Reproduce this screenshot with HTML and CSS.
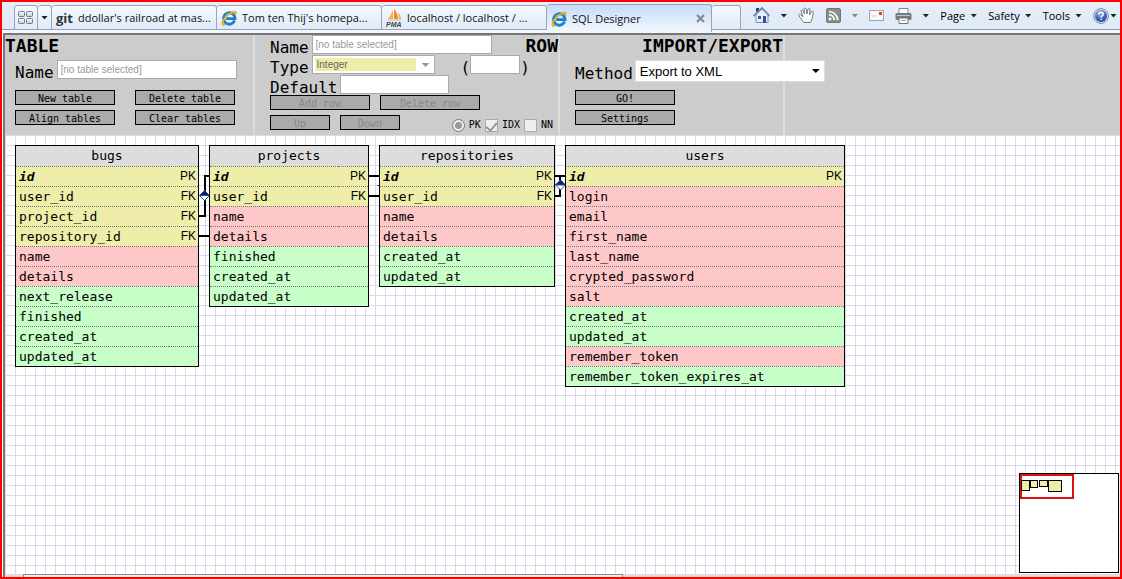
FILE: index.html
```html
<!DOCTYPE html>
<html lang="en">
<head>
<meta charset="utf-8">
<title>SQL Designer</title>
<link rel="stylesheet" href="styles.css">
</head>
<body>
<svg class="defs" width="0" height="0" aria-hidden="true">
  <defs>
    <linearGradient id="steel" x1="0" y1="0" x2="0" y2="1"><stop offset="0" stop-color="#fff"/><stop offset="1" stop-color="#c3cad6"/></linearGradient>
    <radialGradient id="orb" cx=".4" cy=".25" r=".8"><stop offset="0" stop-color="#8db4ee"/><stop offset="1" stop-color="#173a9c"/></radialGradient>
    <symbol id="ie" viewBox="0 0 16 16">
      <path d="M13.6 10.6A5.7 5.7 0 1 1 14 8.6H5.2" fill="none" stroke="#1c7fd0" stroke-width="2.8"/>
      <path d="M4.6 5.6A5 5 0 0 1 11.5 4.4" fill="none" stroke="#7cc6f5" stroke-width="1"/>
      <path d="M1.4 15.2C-.6 13 2.600 7 7.500 3.500C11 1 15 .2 15.300 2.200C15.500 3.200 14.800 4.500 14.200 5.300C14.600 3.200 13.500 2.300 11 3.300C6.500 5.100 2.400 10.500 2.400 13.200C2.400 14.600 4 14.500 5.500 13.700C4.200 15.200 2.400 16 1.400 15.200Z" fill="#f3bd1c" stroke="#c98d10" stroke-width=".4"/>
    </symbol>
  </defs>
</svg>

<header class="browser">
  <nav class="tabs" aria-label="Tabs">
    <button class="tab quick" aria-label="Quick tabs">
      <svg width="16" height="14" viewBox="0 0 16 14"><g fill="url(#steel)" stroke="#6d7890"><rect x=".5" y=".5" width="6" height="5" rx="1"/><rect x="8.500" y=".5" width="6" height="5" rx="1"/><rect x=".5" y="7.500" width="6" height="5" rx="1"/><rect x="8.500" y="7.500" width="6" height="5" rx="1"/></g></svg>
    </button>
    <button class="tab list" aria-label="Tab list"><span class="caret"></span></button>
    <a class="tab page" href="#"><b class="git">git</b><span>ddollar's railroad at mas...</span></a>
    <a class="tab page" href="#"><svg width="16" height="16"><use href="#ie"/></svg><span>Tom ten Thij's homepa...</span></a>
    <a class="tab page" href="#">
      <svg width="16" height="18" viewBox="0 0 16 18"><path d="M7 1L7 10H2Q5 6 7 1Z" fill="#f6b04a"/><path d="M8 0Q12 5 12 10H8Z" fill="#f08c1a"/><path d="M12 3Q15 7 15 10H13Z" fill="#f6b04a"/><path d="M2 11H15" stroke="#b9bccb"/><text class="pma" x="0" y="18">PMA</text></svg>
      <span>localhost / localhost / ...</span></a>
    <a class="tab page active" href="#" aria-current="page"><svg width="16" height="16"><use href="#ie"/></svg><span>SQL Designer</span>
      <svg class="close" width="9" height="9" viewBox="0 0 9 9"><path d="M1 1L8 8M8 1L1 8" stroke="#858b96" stroke-width="2.200"/></svg></a>
    <button class="tab new" aria-label="New tab"></button>
  </nav>
  <div class="commands">
    <button class="cmd" aria-label="Home"><svg width="17" height="17" viewBox="0 0 17 17"><path d="M3 7V15.500H15V7L9 2Z" fill="#e6eefb" stroke="#7c8fb5"/><path d="M3 1H6V5H3Z" fill="#2839a8"/><path d="M.5 9L9 1L16.500 9" fill="none" stroke="#7488a8" stroke-width="1.800"/><path d="M10 9H13V16H10Z" fill="#31548f"/><path d="M5 9H8V12H5Z" fill="#3c5ca0"/></svg><span class="caret"></span></button>
    <button class="cmd" aria-label="Pan"><svg width="17" height="17" viewBox="0 0 17 17"><path d="M6 15.500C4 13 2 10.500.8 8.500C.6 7.200 2 7 3 8L5 10L3 4C3 2.500 4.500 2.300 5 3.500L6.500 7L6 2C6.200.6 7.800.6 8.200 2L9 7L10 2.200C10.500 1 12 1.300 12 2.800L11.500 8L13.500 4.500C14.200 3.500 15.600 4 15.300 5.500C14.500 9 14.500 12 12.500 15.500Z" fill="#fff" stroke="#74787e"/></svg></button>
    <button class="cmd" aria-label="Feeds"><svg width="15" height="15" viewBox="0 0 15 15"><rect x=".5" y=".5" width="14" height="14" rx="1.500" fill="#8c8c8c" stroke="#777"/><circle cx="4" cy="11" r="1.400" fill="#fff"/><path d="M3 6.800A5 5 0 0 1 8.200 12M3 3.500A8.500 8.500 0 0 1 11.500 12" fill="none" stroke="#fff" stroke-width="1.700"/></svg><span class="caret dim"></span></button>
    <button class="cmd" aria-label="Mail"><svg width="15" height="11" viewBox="0 0 15 11"><rect x=".5" y=".5" width="14" height="10" fill="#f8f8f8" stroke="#a3a3aa"/><path d="M10 2H13V5H10Z" fill="#df3c2c"/><path d="M3 6H8" stroke="#ccc"/></svg></button>
    <button class="cmd" aria-label="Print"><svg width="17" height="16" viewBox="0 0 17 16"><path d="M4 .5H13V6H4Z" fill="#fff" stroke="#888"/><rect x=".5" y="5" width="16" height="7" rx="1.500" fill="#777b80"/><path d="M2 7.500H15" stroke="#c3c5c8"/><path d="M4 10H13V15.500H4Z" fill="#fff" stroke="#777"/><path d="M6 12.500H11" stroke="#aaa"/></svg><span class="caret"></span></button>
    <button class="cmd">Page<span class="caret"></span></button>
    <button class="cmd">Safety<span class="caret"></span></button>
    <button class="cmd">Tools<span class="caret"></span></button>
    <button class="cmd" aria-label="Help"><svg width="16" height="16" viewBox="0 0 16 16"><circle cx="8" cy="8" r="7.500" fill="#cdd6e6" stroke="#8b97ae"/><circle cx="8" cy="8" r="6" fill="url(#orb)"/><path d="M5.800 6.500Q5.800 4.300 8 4.300T10.200 6.300Q10.200 7.400 8.200 8.600V9.500M8.200 10.700V12" fill="none" stroke="#fff" stroke-width="1.500"/></svg><span class="caret"></span></button>
  </div>
</header>

<main class="app">
  <div class="bar">
    <section class="panel panel-table">
      <h2>TABLE</h2>
      <div class="line"><label for="tname">Name</label><input class="wide" id="tname" value="[no table selected]" disabled></div>
      <div class="buttons"><button>New table</button><button>Delete table</button><button>Align tables</button><button>Clear tables</button></div>
    </section>
    <section class="panel panel-row">
      <div class="line"><label for="rname">Name</label><input class="wide" id="rname" value="[no table selected]" disabled><h2>ROW</h2></div>
      <div class="line"><label for="rtype">Type</label><span class="pick type"><select id="rtype" disabled><option>Integer</option></select></span><span class="size">(<input id="rsize" aria-label="Size" disabled>)</span></div>
      <div class="line"><label for="rdef">Default</label><input class="default" id="rdef" disabled></div>
      <div class="line actions"><button disabled>Add row</button><button disabled>Delete row</button></div>
      <div class="line actions short"><button disabled>Up</button><button disabled>Down</button>
        <span class="flags"><input type="radio" id="pk" checked disabled><label for="pk">PK</label><input type="checkbox" id="idx" checked disabled><label for="idx">IDX</label><input type="checkbox" id="nn" disabled><label for="nn">NN</label></span></div>
    </section>
    <section class="panel panel-io">
      <h2>IMPORT/EXPORT</h2>
      <div class="line"><label for="method">Method</label><span class="pick method"><select id="method"><option>Export to XML</option></select></span></div>
      <div class="buttons"><button>GO!</button><button>Settings</button></div>
    </section>
  </div>

  <div class="canvas">
    <svg class="links" width="860" height="260" viewBox="5 135 860 260" aria-hidden="true">
      <g fill="none" stroke="#000" stroke-width="2">
        <path d="M209 176H205V216H199M199 236H209M369 176H379M369 196H379M555 176H565M560 176V196H555"/>
      </g>
      <g stroke="#2a4a9c">
        <path d="M204.500 190.500L209.500 195.500L204.500 200.500L199.500 195.500Z" fill="#fff"/><path d="M204.500 190.500L209.500 195.500H199.500Z" fill="#0c1f66"/>
        <path d="M560.500 180L565.500 185L560.500 190L555.500 185Z" fill="#fff"/><path d="M560.500 180L565.500 185H555.500Z" fill="#0c1f66"/>
        <path d="M377 185.500H379"/>
      </g>
    </svg>

    <table class="entity bugs">
      <thead><tr><th colspan="2">bugs</th></tr></thead>
      <tbody>
        <tr class="key"><td class="id">id</td><td>PK</td></tr>
        <tr class="key"><td>user_id</td><td>FK</td></tr>
        <tr class="key"><td>project_id</td><td>FK</td></tr>
        <tr class="key"><td>repository_id</td><td>FK</td></tr>
        <tr class="text"><td>name</td><td></td></tr>
        <tr class="text"><td>details</td><td></td></tr>
        <tr class="date"><td>next_release</td><td></td></tr>
        <tr class="date"><td>finished</td><td></td></tr>
        <tr class="date"><td>created_at</td><td></td></tr>
        <tr class="date"><td>updated_at</td><td></td></tr>
      </tbody>
    </table>
    <table class="entity projects">
      <thead><tr><th colspan="2">projects</th></tr></thead>
      <tbody>
        <tr class="key"><td class="id">id</td><td>PK</td></tr>
        <tr class="key"><td>user_id</td><td>FK</td></tr>
        <tr class="text"><td>name</td><td></td></tr>
        <tr class="text"><td>details</td><td></td></tr>
        <tr class="date"><td>finished</td><td></td></tr>
        <tr class="date"><td>created_at</td><td></td></tr>
        <tr class="date"><td>updated_at</td><td></td></tr>
      </tbody>
    </table>
    <table class="entity repositories">
      <thead><tr><th colspan="2">repositories</th></tr></thead>
      <tbody>
        <tr class="key"><td class="id">id</td><td>PK</td></tr>
        <tr class="key"><td>user_id</td><td>FK</td></tr>
        <tr class="text"><td>name</td><td></td></tr>
        <tr class="text"><td>details</td><td></td></tr>
        <tr class="date"><td>created_at</td><td></td></tr>
        <tr class="date"><td>updated_at</td><td></td></tr>
      </tbody>
    </table>
    <table class="entity users">
      <thead><tr><th colspan="2">users</th></tr></thead>
      <tbody>
        <tr class="key"><td class="id">id</td><td>PK</td></tr>
        <tr class="text"><td>login</td><td></td></tr>
        <tr class="text"><td>email</td><td></td></tr>
        <tr class="text"><td>first_name</td><td></td></tr>
        <tr class="text"><td>last_name</td><td></td></tr>
        <tr class="text"><td>crypted_password</td><td></td></tr>
        <tr class="text"><td>salt</td><td></td></tr>
        <tr class="date"><td>created_at</td><td></td></tr>
        <tr class="date"><td>updated_at</td><td></td></tr>
        <tr class="text"><td>remember_token</td><td></td></tr>
        <tr class="date"><td>remember_token_expires_at</td><td></td></tr>
      </tbody>
    </table>

    <svg class="minimap" width="100" height="100" viewBox="0 0 100 100" role="img" aria-label="Map">
      <rect x=".5" y=".5" width="99" height="99" fill="#fff" stroke="#000"/>
      <rect x="2" y="2" width="52" height="23" fill="none" stroke="#e01010" stroke-width="2"/>
      <g fill="#eea" stroke="#000"><rect x="2.500" y="7.500" width="8" height="10"/><rect x="11.500" y="7.500" width="7" height="7"/><rect x="20.500" y="7.500" width="8" height="6"/><rect x="29.500" y="7.500" width="13" height="11"/></g>
    </svg>
  </div>
  <div class="scroll"><div class="thumb"></div></div>
</main>
</body>
</html>
```
FILE: styles.css
```css
* { box-sizing: border-box; }

body {
  margin: 0;
  min-height: 100vh;
  display: flex;
  flex-direction: column;
  border: 2px solid #f00;
  background: #fff;
  color: #000;
  font-family: "DejaVu Sans Mono", monospace;
}

.defs { position: absolute; }
button, input, select { font: inherit; color: inherit; margin: 0; padding: 0; }

/* browser chrome */
.browser {
  display: flex;
  justify-content: space-between;
  height: 31px;
  padding-left: 12px;
  background: linear-gradient(#e6effa 0, #dfeaf8 27px, #8f99a8 27px, #8f99a8 28px, #f3f7fd 28px);
  font: 11px "Open Sans", sans-serif;
  overflow: hidden;
}
.tabs { display: flex; align-items: flex-start; padding-top: 3px; }
.tab {
  display: flex;
  align-items: center;
  height: 25px;
  border: 1px solid #99a5b6;
  border-left-width: 0;
  border-radius: 3px 3px 0 0;
  background: linear-gradient(#f3f8fe, #dfebfa);
  color: #111;
  text-decoration: none;
  white-space: nowrap;
}
.quick { width: 24px; border-left-width: 1px; justify-content: center; }
.list { width: 14px; justify-content: center; }
.page { width: 165px; gap: 5px; padding: 0 4px; }
.active { height: 28px; margin-top: -1px; border-bottom: 0; background: linear-gradient(#c5dcfa, #f3f7fd); }
.close { margin-left: auto; margin-right: 2px; }
.new { width: 29px; }
.git { font: bold 13px "Open Sans", sans-serif; color: #333; }
.pma { font: italic bold 7px "Liberation Sans", sans-serif; fill: #444; }
.caret { width: 7px; height: 4px; background: #222; clip-path: polygon(0 0, 100% 0, 50% 100%); }
.dim { background: #888; }
.commands { display: flex; align-items: center; gap: 11px; padding: 0 3px 4px 0; }
.cmd { display: flex; align-items: center; gap: 5px; border: 0; background: none; }
.cmd svg + .caret { margin-left: 5px; }
.cmd:last-child { gap: 0; }
.cmd:last-child svg + .caret { margin-left: 1px; }

/* toolbar */
.app {
  flex: 1;
  display: flex;
  flex-direction: column;
  margin-left: 1px;
  border-left: 2px solid #777;
  border-top: 2px solid #777;
}
.bar { display: flex; background: #ccc; }
.panel { height: 100px; border-right: 2px solid #ddd; font-size: 16px; }
.panel-table { width: 250px; padding-left: 10px; }
.panel-row { width: 305px; padding-left: 15px; }
.panel-io { width: 225px; padding-left: 15px; }
h2 { margin: 0; font-size: 18px; line-height: 22px; height: 25px; }
.panel-table h2 { margin-left: -10px; }
.panel-io h2 { text-align: right; }
.line { display: flex; align-items: flex-start; gap: 3px; height: 20px; line-height: 25px; white-space: nowrap; }
.panel-row h2 { margin-left: auto; }
.line input:not([type]) {
  height: 19px;
  padding: 0 3px;
  border: 1px solid #aaa;
  background: #fff;
  color: #999;
  font: 10px "Liberation Sans", sans-serif;
}
.line .wide { width: 180px; }
.line .default { width: 109px; }
.panel button {
  width: 100px;
  height: 15px;
  padding-top: 1px;
  border: 1px solid #000;
  background: #aaa;
  font-size: 10px;
  line-height: 13px;
}
.panel button:disabled { color: #888; }
.buttons { display: grid; grid-template-columns: 100px 100px; gap: 5px 20px; margin-top: 10px; }
.panel-io .buttons { grid-template-columns: 100px; }
.actions { gap: 10px; }
.panel .short button { width: 60px; }
.pick { position: relative; display: flex; }
.pick::after {
  content: "";
  position: absolute;
  right: 5px;
  top: 8px;
  width: 8px;
  height: 4px;
  background: #000;
  clip-path: polygon(0 0, 100% 0, 50% 100%);
}
.pick select { appearance: none; border: 1px solid #aaa; border-radius: 0; background: #fff; opacity: 1; }
.type select {
  width: 123px;
  height: 19px;
  padding-left: 4px;
  background: linear-gradient(#eea, #eea) 2px 2px / 101px 13px no-repeat #fff;
  color: #666;
  font: 10px "Liberation Sans", sans-serif;
}
.type::after { background: #999; }
.size { display: flex; margin-left: 23px; }
.size input { width: 50px; }
.panel-io .line { gap: 2px; line-height: 27px; }
.method select { width: 190px; height: 22px; padding-left: 4px; border-color: #ddd; font: 13px "Liberation Sans", sans-serif; }
.method::after { top: 9px; }
.flags { display: flex; align-items: center; gap: 4px; height: 20px; margin-left: auto; padding-right: 5px; font-size: 10px; line-height: 20px; }
.flags input {
  appearance: none;
  display: grid;
  place-items: center;
  width: 13px;
  height: 13px;
  border: 1px solid #aaa;
  background: #eee;
}
.flags [type="radio"] { border-color: #777; border-radius: 50%; }
.flags [type="radio"]::before { content: ""; width: 7px; height: 7px; border-radius: 50%; background: #999; }
.flags [type="checkbox"]:checked::before { content: ""; width: 5px; height: 9px; border: solid #999; border-width: 0 2px 2px 0; transform: rotate(40deg); }

/* diagram */
.canvas {
  position: relative;
  flex: 1;
  min-height: 260px;
  background:
    linear-gradient(90deg, #dadaea 1px, transparent 1px) 0 0 / 10px 10px,
    linear-gradient(#dadaea 1px, transparent 1px) 0 0 / 10px 10px;
}
.links { position: absolute; left: 0; top: 0; }
.entity {
  position: absolute;
  top: 10px;
  border: 1px solid #000;
  border-spacing: 0;
  font-size: 13px;
  line-height: 19px;
}
.bugs { left: 10px; width: 184px; }
.projects { left: 204px; width: 160px; }
.repositories { left: 374px; width: 176px; }
.users { left: 560px; width: 280px; }
.entity th { height: 20px; padding: 0; background: #ddd; font-weight: normal; line-height: 18px; }
.entity td { height: 20px; padding: 0 3px; border-top: 1px dotted #777; }
.entity td + td { padding: 0 2px; text-align: right; font-size: 12px; font-family: "Liberation Sans", sans-serif; }
.entity .id { font-weight: bold; font-style: italic; }
.key { background: #eea; }
.text { background: #ffc8c8; }
.date { background: #c8ffc8; }
.minimap { position: absolute; right: 1px; bottom: 1px; }

.scroll { height: 3px; padding-left: 18px; background: #e4dcdc; }
.thumb { width: 600px; max-width: 60%; height: 3px; border: 1px solid #888; border-bottom: 0; background: #f6f0f0; }
```
